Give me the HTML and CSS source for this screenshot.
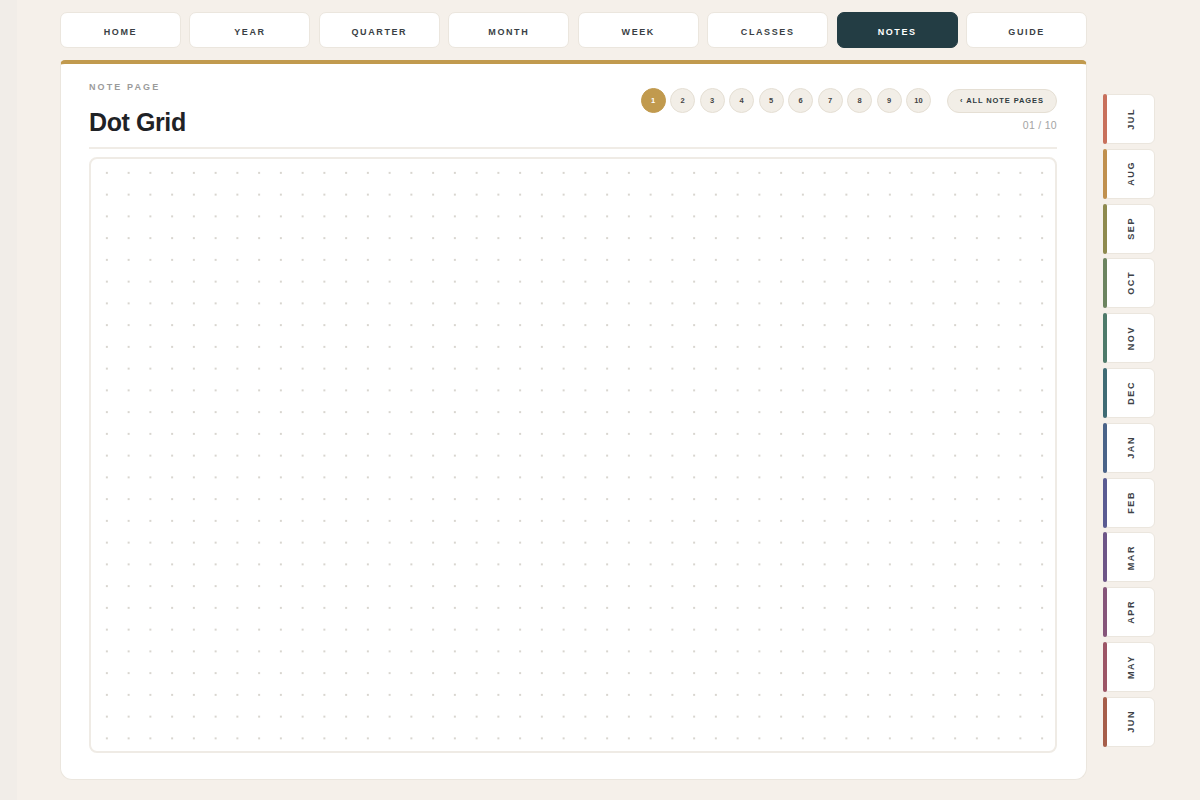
FILE: index.html
```html
<!DOCTYPE html>
<html lang="en">
<head>
    <meta charset="UTF-8">
    <meta name="viewport" content="width=device-width, initial-scale=1.0">
    <title>Notes - Dot Grid</title>
    <link rel="stylesheet" href="styles.css">
</head>
<body>
    <div class="page">
        <div class="main">
            <div class="nav">
                <a href="#" class="nav-btn">Home</a>
                <a href="#" class="nav-btn">Year</a>
                <a href="#" class="nav-btn">Quarter</a>
                <a href="#" class="nav-btn">Month</a>
                <a href="#" class="nav-btn">Week</a>
                <a href="#" class="nav-btn">Classes</a>
                <a href="#" class="nav-btn active">Notes</a>
                <a href="#" class="nav-btn">Guide</a>
            </div>
            <div class="card">
                <div class="card-head">
                    <div class="head-left">
                        <div class="eyebrow">Note Page</div>
                        <h1 class="title">Dot Grid</h1>
                    </div>
                    <div class="head-right">
                        <div class="pager">
                            <a href="#" class="pg current">1</a>
                            <a href="#" class="pg">2</a>
                            <a href="#" class="pg">3</a>
                            <a href="#" class="pg">4</a>
                            <a href="#" class="pg">5</a>
                            <a href="#" class="pg">6</a>
                            <a href="#" class="pg">7</a>
                            <a href="#" class="pg">8</a>
                            <a href="#" class="pg">9</a>
                            <a href="#" class="pg">10</a>
                            <a href="#" class="all-pages">&lsaquo; All Note Pages</a>
                        </div>
                        <div class="count">01 / 10</div>
                    </div>
                </div>
                <div class="dot-grid"></div>
            </div>
        </div>
        <div class="tabs">
            <a href="#" class="tab jul"><span>Jul</span></a>
            <a href="#" class="tab aug"><span>Aug</span></a>
            <a href="#" class="tab sep"><span>Sep</span></a>
            <a href="#" class="tab oct"><span>Oct</span></a>
            <a href="#" class="tab nov"><span>Nov</span></a>
            <a href="#" class="tab dec"><span>Dec</span></a>
            <a href="#" class="tab jan"><span>Jan</span></a>
            <a href="#" class="tab feb"><span>Feb</span></a>
            <a href="#" class="tab mar"><span>Mar</span></a>
            <a href="#" class="tab apr"><span>Apr</span></a>
            <a href="#" class="tab may"><span>May</span></a>
            <a href="#" class="tab jun"><span>Jun</span></a>
        </div>
    </div>
</body>
</html>
```

FILE: styles.css
```css
:root {
    --bg-color: #f5f0ea;
    --edge-color: #f1ede8;
    --card-bg: #ffffff;
    --line-color: #ebe6de;
    --text-color: #1f2226;
    --nav-text: #3a3f45;
    --muted: #9b9b9b;
    --gold: #c19a4e;
    --dark: #233d44;
    --chip-bg: #f2eee7;
    --chip-border: #e5dfd4;
}
html {
    background: var(--edge-color);
}
body {
    font-family: 'Liberation Sans', Arial, sans-serif;
    margin: 0 0 0 17px;
    padding: 0;
    background-color: var(--bg-color);
    color: var(--text-color);
    min-height: 800px;
}
a {
    text-decoration: none;
}
.page {
    display: flex;
    align-items: flex-start;
    gap: 16px;
    padding: 12px 0 0 43px;
}
.main {
    width: 1027px;
    display: flex;
    flex-direction: column;
}
.nav {
    display: flex;
    gap: 8.6px;
    margin-bottom: 12px;
}
.nav-btn {
    flex: 1;
    height: 36px;
    display: flex;
    align-items: center;
    justify-content: center;
    padding-top: 3px;
    background: var(--card-bg);
    border: 1px solid var(--line-color);
    border-radius: 7px;
    box-sizing: border-box;
    color: var(--nav-text);
    font-size: 9px;
    font-weight: bold;
    letter-spacing: 1.6px;
    text-transform: uppercase;
}
.nav-btn.active {
    background: var(--dark);
    border-color: var(--dark);
    color: #ffffff;
}
.card {
    height: 720px;
    box-sizing: border-box;
    background: var(--card-bg);
    border: 1px solid var(--line-color);
    border-top: 4px solid var(--gold);
    border-radius: 5px 5px 12px 12px;
    padding: 17px 29px 26px 28px;
    display: flex;
    flex-direction: column;
}
.card-head {
    display: flex;
    justify-content: space-between;
    align-items: flex-start;
    border-bottom: 2px solid #f0ece6;
    padding-bottom: 10px;
    margin-bottom: 8px;
}
.eyebrow {
    font-size: 9px;
    line-height: 12px;
    font-weight: bold;
    letter-spacing: 2.1px;
    text-transform: uppercase;
    color: var(--muted);
}
.title {
    margin: 14px 0 0 0;
    font-size: 25px;
    line-height: 30px;
    font-weight: bold;
    letter-spacing: -0.4px;
    color: var(--text-color);
}
.head-right {
    display: flex;
    flex-direction: column;
    align-items: flex-end;
    padding-top: 7px;
}
.pager {
    display: flex;
    align-items: center;
    gap: 4.5px;
}
.pg {
    width: 25px;
    height: 25px;
    box-sizing: border-box;
    border-radius: 50%;
    background: var(--chip-bg);
    border: 1px solid var(--chip-border);
    display: flex;
    align-items: center;
    justify-content: center;
    font-size: 7.5px;
    font-weight: bold;
    color: #444444;
}
.pg.current {
    background: var(--gold);
    border-color: var(--gold);
    color: #ffffff;
}
.all-pages {
    margin-left: 11.5px;
    height: 24px;
    width: 110px;
    box-sizing: border-box;
    border-radius: 12px;
    background: var(--chip-bg);
    border: 1px solid var(--chip-border);
    display: flex;
    align-items: center;
    justify-content: center;
    font-size: 7.5px;
    font-weight: bold;
    letter-spacing: 0.9px;
    text-transform: uppercase;
    color: #2f3b40;
}
.count {
    margin-top: 6px;
    font-size: 10.5px;
    line-height: 12px;
    color: #a3a3a3;
    letter-spacing: 0.3px;
}
.dot-grid {
    flex: 1;
    border: 2px solid #efebe5;
    border-radius: 8px;
    background-color: #ffffff;
    background-image: radial-gradient(circle, #d8d5cf 0.9px, transparent 1.4px);
    background-size: 21.75px 21.75px;
    background-position: 5px 3px;
}
.tabs {
    margin-top: 82px;
    display: flex;
    flex-direction: column;
    gap: 4.8px;
}
.tab {
    position: relative;
    width: 52px;
    height: 50px;
    box-sizing: border-box;
    background: var(--card-bg);
    border: 1px solid var(--line-color);
    border-radius: 6px;
    display: flex;
    align-items: center;
    justify-content: center;
    padding-left: 4px;
}
.tab::before {
    content: "";
    position: absolute;
    left: -1px;
    top: -1px;
    bottom: -1px;
    width: 4px;
    border-radius: 2px;
    background: var(--tab-color);
}
.tab span {
    writing-mode: vertical-rl;
    transform: rotate(180deg);
    font-size: 9px;
    font-weight: bold;
    letter-spacing: 1.6px;
    text-transform: uppercase;
    color: #3d4247;
}
.jul { --tab-color: #c8705c; }
.aug { --tab-color: #c0904e; }
.sep { --tab-color: #8e8a4e; }
.oct { --tab-color: #6c8460; }
.nov { --tab-color: #4e7a6a; }
.dec { --tab-color: #3f6b74; }
.jan { --tab-color: #4a6388; }
.feb { --tab-color: #5a5b92; }
.mar { --tab-color: #6d5587; }
.apr { --tab-color: #86557a; }
.may { --tab-color: #9c5566; }
.jun { --tab-color: #a65e4a; }
```
